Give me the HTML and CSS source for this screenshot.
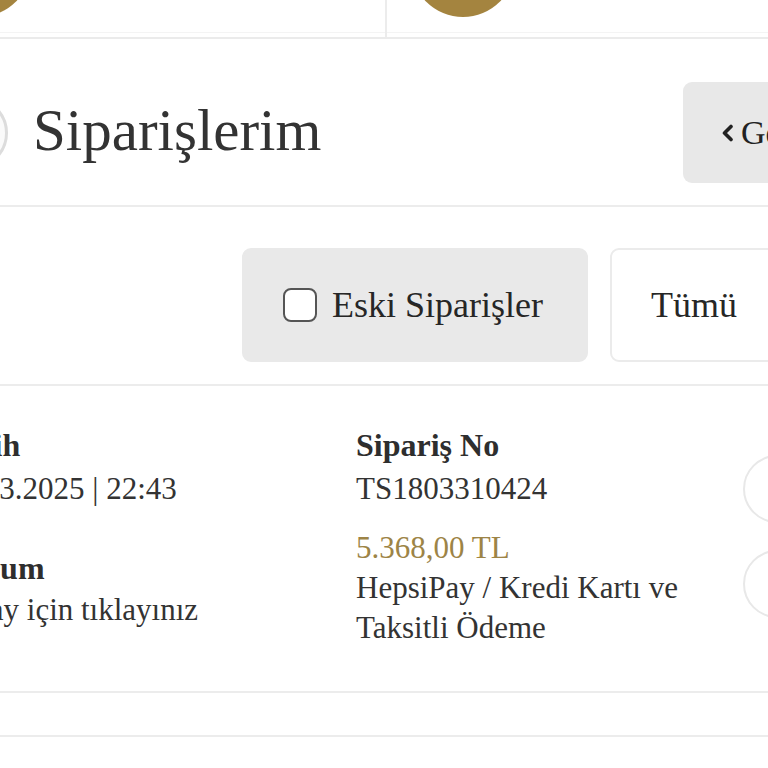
FILE: index.html
```html
<!DOCTYPE html>
<html lang="tr">
<head>
<meta charset="utf-8">
<title>Siparişlerim</title>
<link rel="stylesheet" href="styles.css">
</head>
<body>
<div class="page">
  <div class="top-strip">
    <div class="top-card first"><div class="top-inner"><span class="coin coin-a"></span></div></div>
    <div class="top-card second"><div class="top-inner"><span class="coin coin-b"></span></div></div>
  </div>

  <header class="head">
    <span class="avatar"></span>
    <h1 class="title">Siparişlerim</h1>
    <button class="back" type="button">
      <svg class="chev" width="14" height="18" viewBox="0 0 14 18" aria-hidden="true"><path d="M10 2.5 L3.5 9 L10 15.5" fill="none" stroke="#222" stroke-width="3.6" stroke-linecap="round" stroke-linejoin="round"/></svg>
      <span>Geri</span>
    </button>
  </header>

  <div class="filters">
    <button class="chip active" type="button"><span class="check"></span>Eski Siparişler</button>
    <button class="chip" type="button">Tümü</button>
  </div>

  <section class="order">
    <div class="col col-left">
      <div class="label">Tarih</div>
      <div class="value">18.03.2025 | 22:43</div>
      <div class="label gap">Durum</div>
      <div class="value lh40">Detay için tıklayınız</div>
    </div>
    <div class="col col-mid">
      <div class="label">Sipariş No</div>
      <div class="value">TS1803310424</div>
      <div class="price">5.368,00 TL</div>
      <div class="value lh40">HepsiPay / Kredi Kartı ve Taksitli Ödeme</div>
    </div>
    <div class="actions">
      <span class="circ"></span>
      <span class="circ"></span>
    </div>
  </section>

  <div class="next-row"></div>
</div>
</body>
</html>
```

FILE: styles.css
```css
html, body {
  margin: 0;
  padding: 0;
  background: #ffffff;
  overflow: hidden;
}

body {
  width: 768px;
  height: 768px;
  font-family: "Liberation Serif", "Times New Roman", serif;
  color: #303030;
}

.page {
  width: 960px;
  margin-left: -64px;
}

/* top strip */
.top-strip {
  display: flex;
  height: 37px;
  border-bottom: 2px solid #ebebeb;
  overflow: hidden;
}

.top-card {
  flex: none;
  height: 37px;
}

.top-card.first {
  width: 449px;
  border-right: 2px solid #ececec;
}

.top-card.second {
  width: 469px;
}

.top-inner {
  height: 32px;
  border-bottom: 1px solid #f4f4f4;
  overflow: hidden;
  display: flex;
}

.coin {
  display: block;
  width: 104px;
  height: 104px;
  border-radius: 50%;
  background: #a4843f;
  margin-top: -87px;
}

.coin-a { margin-left: -9px; }
.coin-b { margin-left: 24px; }

/* header */
.head {
  display: flex;
  align-items: center;
  padding: 43px 0 22px;
  border-bottom: 2px solid #ececec;
}

.avatar {
  flex: none;
  width: 66px;
  height: 66px;
  border-radius: 50%;
  border: 3px solid #dcdcdc;
  background: #fafafa;
}

.title {
  margin: 0 0 0 25px;
  font-weight: normal;
  font-size: 59px;
  line-height: 66px;
  color: #333;
  padding-bottom: 6px;
}

.back {
  flex: none;
  width: 200px;
  height: 101px;
  margin-left: auto;
  margin-right: 13px;
  border: none;
  border-radius: 9px;
  background: #e8e8e8;
  display: flex;
  align-items: center;
  padding: 0 0 0 38px;
  gap: 6px;
  font-family: inherit;
  font-size: 34px;
  color: #222;
}

.chev { flex: none; }

/* filters */
.filters {
  display: flex;
  gap: 22px;
  padding: 41px 0 22px 306px;
  border-bottom: 2px solid #ececec;
}

.chip {
  flex: none;
  height: 114px;
  border-radius: 9px;
  border: 2px solid #ebebeb;
  background: #fff;
  display: flex;
  align-items: center;
  padding: 0 39px;
  font-family: inherit;
  font-size: 36px;
  color: #262626;
}

.chip.active {
  width: 346px;
  background: #e9e9e9;
  border-color: #e9e9e9;
  gap: 15px;
  padding-left: 39px;
}

.check {
  flex: none;
  width: 30px;
  height: 30px;
  border: 2.5px solid #555;
  border-radius: 8px;
  background: #fff;
}

/* order */
.order {
  display: flex;
  padding: 38px 0 43px 9px;
  border-bottom: 2px solid #ececec;
}

.col { flex: none; }

.col-left { width: 411px; }

.col-mid { width: 387px; }

.label {
  font-size: 32px;
  font-weight: 700;
  line-height: 43px;
  color: #2e2e2e;
}

.label.gap { margin-top: 37px; }

.value {
  font-size: 31px;
  line-height: 43px;
  color: #333;
}

.value.lh40 { line-height: 40px; }

.col-mid .value.lh40 { width: 340px; }

.price {
  margin-top: 18px;
  font-size: 31px;
  line-height: 40px;
  color: #9d8446;
}

.actions {
  display: flex;
  flex-direction: column;
  gap: 27px;
  padding-top: 31px;
}

.circ {
  display: block;
  width: 64px;
  height: 64px;
  border-radius: 50%;
  border: 2px solid #e8e8e8;
}

.next-row {
  height: 42px;
  border-bottom: 2px solid #ececec;
}
```
